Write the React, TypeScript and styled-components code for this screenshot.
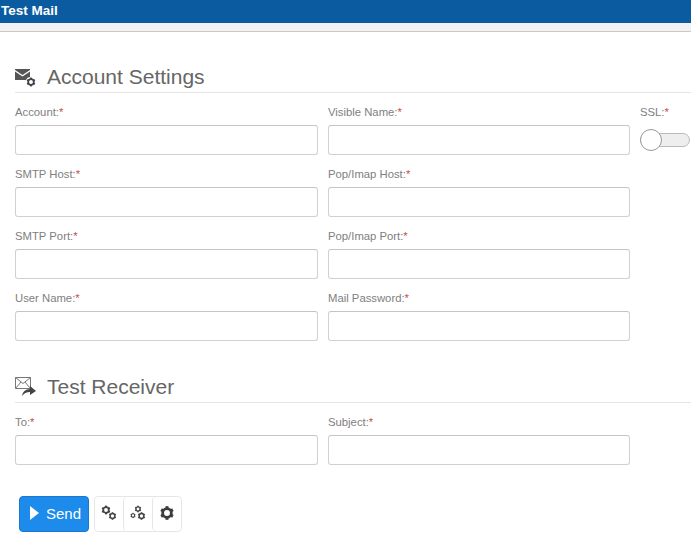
import styled, { createGlobalStyle } from "styled-components";

const GlobalStyle = createGlobalStyle`
  html, body {
    margin: 0;
    padding: 0;
    background: #fff;
    overflow: hidden;
    font-family: "Liberation Sans", Arial, sans-serif;
  }
`;

const Page = styled.div`
  width: 691px;
  height: 537px;
  overflow: hidden;
`;

const TitleBar = styled.div`
  height: 23px;
  background: #0b5ba1;
  color: #fff;
  font-size: 13.5px;
  font-weight: 700;
  line-height: 21px;
  padding-left: 1px;
`;

const SubBar = styled.div`
  height: 8px;
  background: #f2f2f2;
  border-bottom: 1px solid #c9c9c9;
`;

const Content = styled.div`
  padding: 30px 0 0 15px;
`;

const Section = styled.section`
  margin-bottom: 31px;
`;

const SectionTitle = styled.h2`
  display: flex;
  align-items: center;
  gap: 11px;
  height: 30px;
  margin: 0 0 9px;
  border-bottom: 1px solid #e5e5e5;
  color: #666;
  font-size: 21px;
  font-weight: 400;
  line-height: 30px;
`;

const Grid = styled.div`
  display: grid;
  grid-template-columns: 303px 302px 51px;
  column-gap: 10px;
  row-gap: 9px;
`;

const Field = styled.div`
  display: flex;
  flex-direction: column;
  gap: 5px;
`;

const Label = styled.label`
  height: 18px;
  color: #808080;
  font-size: 11.3px;
  line-height: 21px;

  b {
    color: #c8504c;
    font-weight: 400;
  }
`;

const Input = styled.input`
  box-sizing: border-box;
  width: 100%;
  height: 30px;
  padding: 0 8px;
  background: #fff;
  border: 1px solid #d0d0d0;
  border-top-color: #c4c4c4;
  border-radius: 3px;
  outline: none;
`;

const Toggle = styled.div`
  position: relative;
  box-sizing: border-box;
  width: 50px;
  height: 14px;
  margin-top: 8px;
  background: #eee;
  border: 1px solid #bbb;
  border-radius: 7px;
`;

const Knob = styled.span`
  position: absolute;
  left: -1px;
  top: -5px;
  box-sizing: border-box;
  width: 22px;
  height: 22px;
  background: #fff;
  border: 1px solid #999;
  border-radius: 50%;
`;

const Actions = styled.div`
  display: flex;
  align-items: center;
  gap: 5px;
  padding-left: 4px;
`;

const SendButton = styled.button`
  display: flex;
  align-items: center;
  gap: 7px;
  box-sizing: border-box;
  width: 70px;
  height: 36px;
  padding: 0 0 2px 10px;
  background: #1c8beb;
  border: 1px solid #1778cc;
  border-radius: 4px;
  color: #fff;
  font-family: inherit;
  font-size: 15px;
`;

const ToolGroup = styled.div`
  display: flex;
  height: 36px;
  box-sizing: border-box;
  border: 1px solid #e6e6e6;
  border-radius: 4px;
`;

const ToolButton = styled.button<{ $first?: boolean }>`
  display: flex;
  align-items: center;
  justify-content: center;
  width: ${(p) => (p.$first ? "28px" : "29px")};
  padding: 0 0 3px;
  background: #fff;
  border: 0;
  border-radius: 4px;
  border-left: ${(p) => (p.$first ? "0" : "1px solid #e6e6e6")};
`;

function Gear({ x, y, r, color = "#444" }: { x: number; y: number; r: number; color?: string }) {
  const teeth = [0, 60, 120];
  return (
    <g>
      {teeth.map((a) => (
        <rect
          key={a}
          x={x - r * 0.24}
          y={y - r * 1.1}
          width={r * 0.48}
          height={r * 2.2}
          fill={color}
          transform={`rotate(${a} ${x} ${y})`}
        />
      ))}
      <circle cx={x} cy={y} r={r * 0.7} fill="#fff" stroke={color} strokeWidth={r * 0.44} />
    </g>
  );
}

function MailGearIcon() {
  return (
    <svg width="21" height="19" viewBox="0 0 21 19">
      <path d="M0 1h15v1L7.500 7 0 2z" fill="#555" />
      <path d="M0 3.500l7.500 5 7.500-5V9a4.500 4.500 0 0 0-4 3H0z" fill="#555" />
      <Gear x={16} y={14} r={4} />
    </svg>
  );
}

function MailForwardIcon() {
  return (
    <svg width="21" height="20" viewBox="0 0 21 20" fill="none">
      <path d="M.5.500h15v11H.5z" stroke="#777" fill="#fff" />
      <path d="M.5.500l7.500 6 7.500-6M.5 11.500l5.500-6.500M15.500 11.500l-5.500-6.500" stroke="#777" />
      <path d="M7 19c.5-4 3.500-7 8-7V9l6 5-6 4v-3c-3.500 0-6 1.500-8 4z" fill="#444" />
    </svg>
  );
}

function GearsIcon() {
  return (
    <svg width="16" height="16" viewBox="0 0 16 16">
      <Gear x={5} y={5} r={4} />
      <Gear x={11.500} y={11} r={3.400} />
    </svg>
  );
}

function NodesIcon() {
  return (
    <svg width="16" height="16" viewBox="0 0 16 16">
      <Gear x={8} y={4} r={3} />
      <Gear x={3} y={10.500} r={2.400} />
      <Gear x={11.500} y={11} r={3.400} />
    </svg>
  );
}

function CogIcon() {
  return (
    <svg width="16" height="16" viewBox="0 0 16 16">
      <Gear x={8} y={8} r={6.200} color="#3c3c3c" />
    </svg>
  );
}

function FormField({ label }: { label: string }) {
  return (
    <Field>
      <Label>
        {label}:<b>*</b>
      </Label>
      <Input />
    </Field>
  );
}

export default function App() {
  return (
    <Page>
      <GlobalStyle />
      <TitleBar>Test Mail</TitleBar>
      <SubBar />
      <Content>
        <Section>
          <SectionTitle>
            <MailGearIcon />
            Account Settings
          </SectionTitle>
          <Grid>
            <FormField label="Account" />
            <FormField label="Visible Name" />
            <Field>
              <Label>
                SSL:<b>*</b>
              </Label>
              <Toggle>
                <Knob />
              </Toggle>
            </Field>
            <FormField label="SMTP Host" />
            <FormField label="Pop/Imap Host" />
            <div />
            <FormField label="SMTP Port" />
            <FormField label="Pop/Imap Port" />
            <div />
            <FormField label="User Name" />
            <FormField label="Mail Password" />
          </Grid>
        </Section>
        <Section>
          <SectionTitle>
            <MailForwardIcon />
            Test Receiver
          </SectionTitle>
          <Grid>
            <FormField label="To" />
            <FormField label="Subject" />
          </Grid>
        </Section>
        <Actions>
          <SendButton>
            <svg width="9" height="14" viewBox="0 0 9 14">
              <path d="M0 0l9 7-9 7z" fill="#fff" />
            </svg>
            Send
          </SendButton>
          <ToolGroup>
            <ToolButton $first>
              <GearsIcon />
            </ToolButton>
            <ToolButton>
              <NodesIcon />
            </ToolButton>
            <ToolButton>
              <CogIcon />
            </ToolButton>
          </ToolGroup>
        </Actions>
      </Content>
    </Page>
  );
}
